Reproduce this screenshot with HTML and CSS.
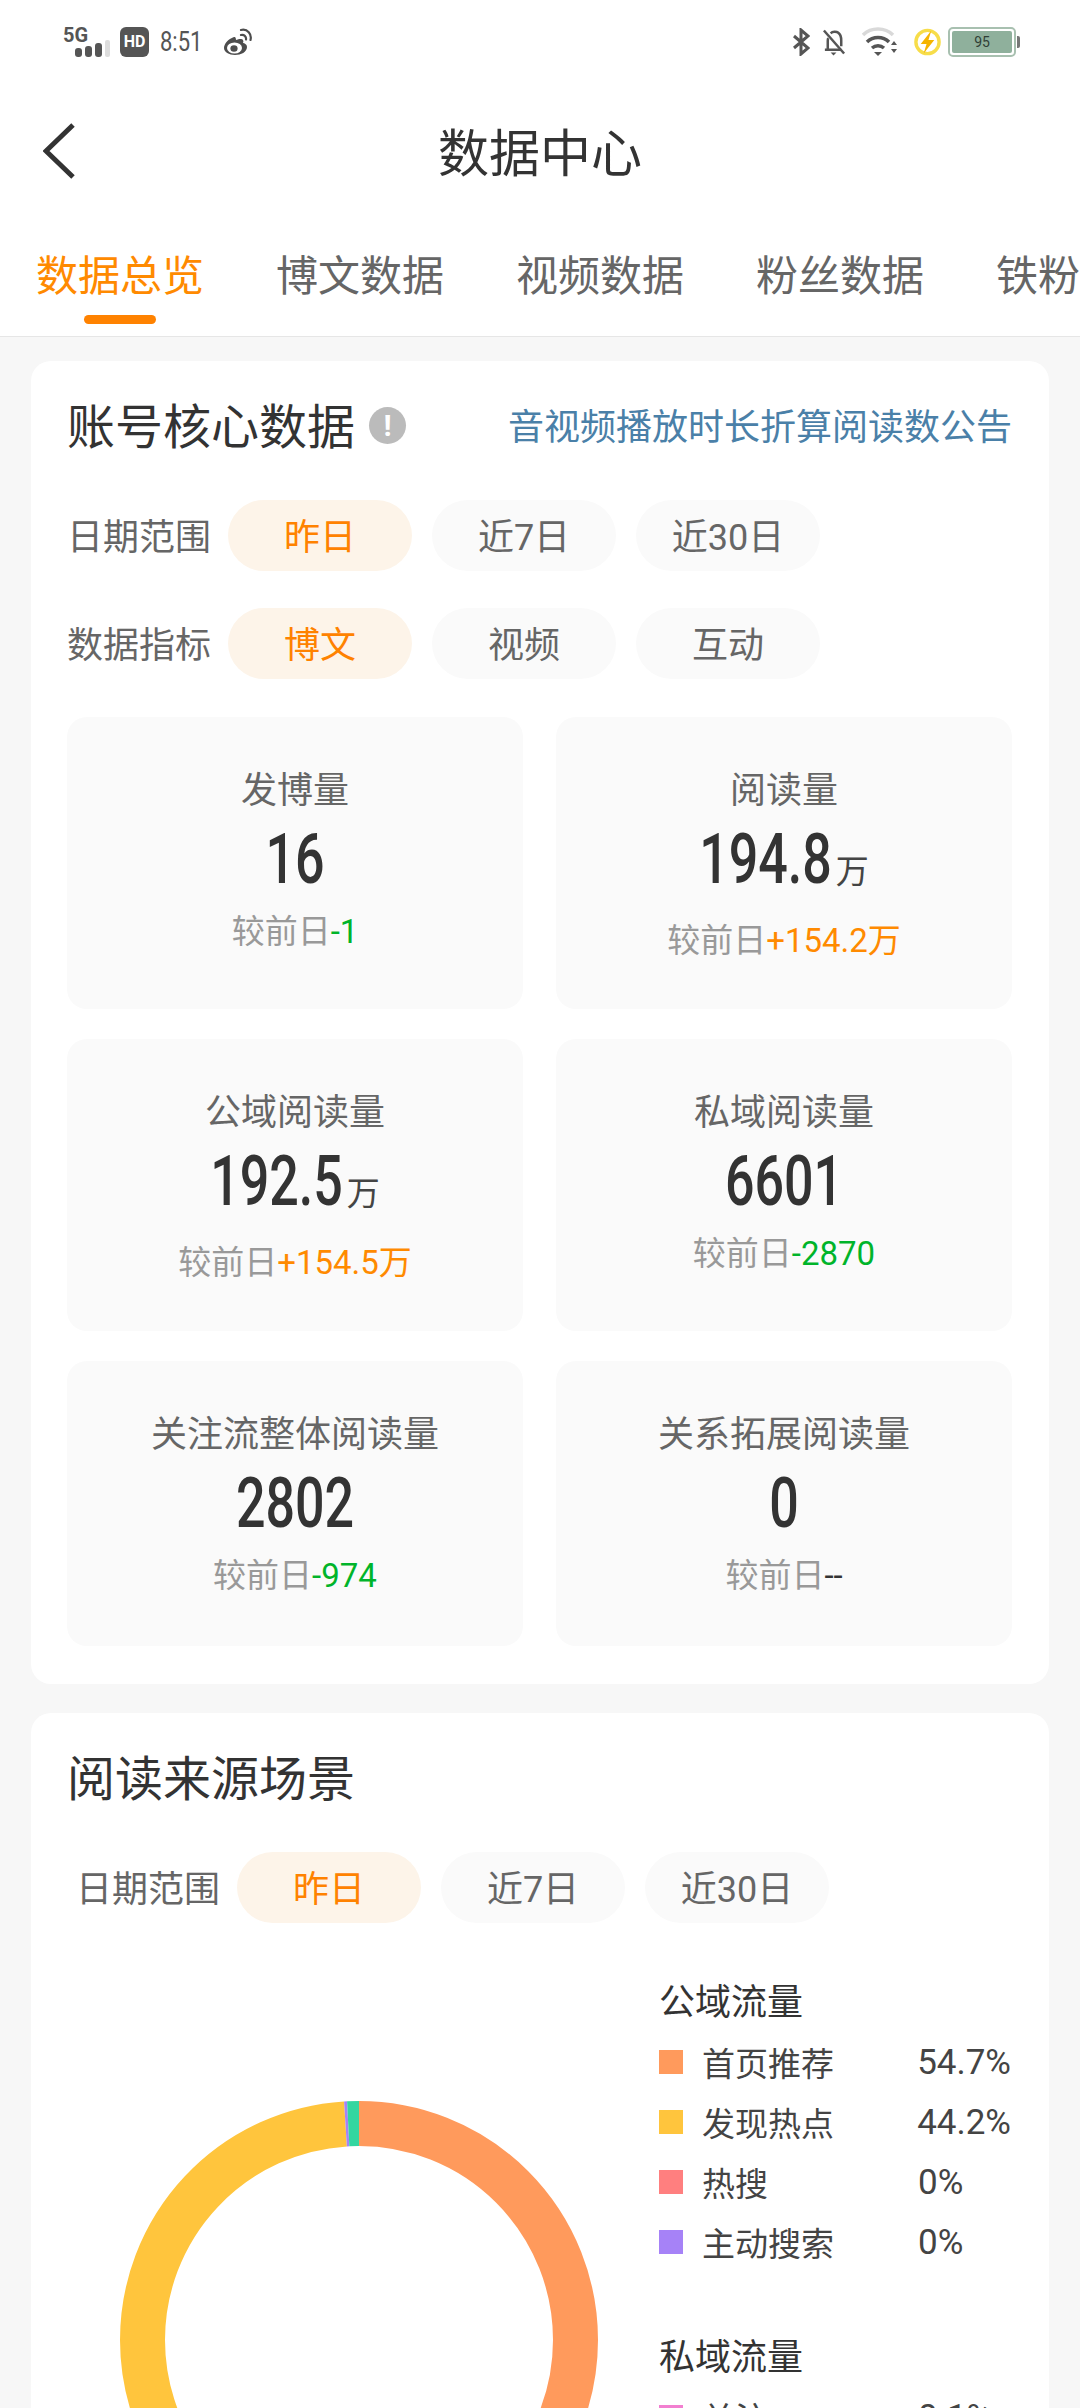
FILE: index.html
```html
<!DOCTYPE html>
<html lang="zh">
<head>
    <meta charset="UTF-8">
    <meta name="viewport" content="width=device-width, initial-scale=1.0">
    <title>数据中心</title>
    <link rel="stylesheet" href="styles.css">
</head>
<body>

    <!-- Barra de estado -->
    <div class="status">
        <div class="status-group">
            <div class="signal">
                <span class="signal-5g">5G</span>
                <svg class="signal-bars" width="35" height="17" viewBox="0 0 35 17">
                    <rect x="0" y="8" width="7" height="9" rx="3" fill="#555"/>
                    <rect x="10" y="6" width="7" height="11" rx="3" fill="#555"/>
                    <rect x="20" y="3" width="7" height="14" rx="3" fill="#555"/>
                    <rect x="30" y="0" width="5" height="17" rx="2" fill="#ddd"/>
                </svg>
            </div>
            <span class="hd">HD</span>
            <span class="clock">8:51</span>
            <svg class="weibo" width="30" height="28" viewBox="0 0 30 28">
                <path d="M11 9C5 11 1 16 1 20c0 4 5 7 11 7s12-3 12-8c0-3-3-4-4-4 1-2 0-4-2-4-2-.2-4 .6-5 1 0-2-.5-3.500-2-3z" fill="#4d4d4d"/>
                <ellipse cx="11.500" cy="20" rx="7.500" ry="5.500" fill="#fff"/>
                <ellipse cx="11" cy="20.500" rx="3.600" ry="3.200" fill="#4d4d4d"/>
                <path d="M18 7c3-.8 5.500 1.500 5 4.500M18 2c6.500-1.500 11 4 9.500 10" fill="none" stroke="#4d4d4d" stroke-width="2.200" stroke-linecap="round"/>
            </svg>
        </div>
        <div class="status-group status-right">
            <svg class="icon-bt" width="18" height="28" viewBox="0 0 18 28">
                <path d="M2 8l14 12-7 6V2l7 6L2 20" fill="none" stroke="#555" stroke-width="3"/>
            </svg>
            <svg class="icon-bell" width="25" height="30" viewBox="0 0 26 30">
                <path d="M3 23h17M6 23v-9c0-1 0-2 .5-3M9 6c2-2 6-2 8-.5 3 2 3 5 3 8v6" fill="none" stroke="#555" stroke-width="2.600"/>
                <path d="M2 3l21 24" stroke="#555" stroke-width="2.600"/>
                <path d="M9 26h6l-3 3z" fill="#555"/>
            </svg>
            <svg class="icon-wifi" width="36" height="30" viewBox="0 0 36 30">
                <path d="M1 8c8-8 22-8 30 0" fill="none" stroke="#d9d9d9" stroke-width="3.500"/>
                <path d="M5 15c6-6 16-6 22 0M10 21c3.500-3 8.500-3 12 0" fill="none" stroke="#555" stroke-width="3.500"/>
                <path d="M12 25h8l-4 4z" fill="#555"/>
                <path d="M29 18l3-4 3 4zM29 22h6l-3 4z" fill="#555"/>
            </svg>
            <svg class="icon-bolt" width="29" height="30" viewBox="0 0 30 30">
                <circle cx="15" cy="15" r="12" fill="#fff" stroke="#f7dd4a" stroke-width="3.500"/>
                <path d="M19 3L8 17h6l-3 10 11-14h-6z" fill="#f5b400"/>
            </svg>
            <div class="battery">
                <div class="battery-body"><span class="battery-fill">95</span></div>
                <span class="battery-nub"></span>
            </div>
        </div>
    </div>

    <!-- Cabecera con título -->
    <div class="nav">
        <svg class="back" width="32" height="56" viewBox="0 0 32 56">
            <path d="M30 2L3 28l27 26" fill="none" stroke="#333" stroke-width="5"/>
        </svg>
        <h1 class="nav-title">数据中心</h1>
    </div>

    <!-- Pestañas -->
    <div class="tabs">
        <span class="tab tab-active">数据总览</span>
        <span class="tab">博文数据</span>
        <span class="tab">视频数据</span>
        <span class="tab">粉丝数据</span>
        <span class="tab">铁粉</span>
    </div>

    <div class="page">

        <!-- Datos principales -->
        <section class="card card-core">
            <div class="card-head">
                <div class="card-title-wrap">
                    <h2 class="card-title">账号核心数据</h2>
                    <span class="info">!</span>
                </div>
                <span class="notice">音视频播放时长折算阅读数公告</span>
            </div>

            <div class="filter">
                <span class="filter-label">日期范围</span>
                <span class="chip chip-active">昨日</span>
                <span class="chip">近7日</span>
                <span class="chip">近30日</span>
            </div>
            <div class="filter filter-second">
                <span class="filter-label">数据指标</span>
                <span class="chip chip-active">博文</span>
                <span class="chip">视频</span>
                <span class="chip">互动</span>
            </div>

            <div class="tiles">
                <div class="tile">
                    <div class="tile-label">发博量</div>
                    <div class="tile-value"><span class="num">16</span></div>
                    <div class="tile-cmp">较前日<span class="down">-1</span></div>
                </div>
                <div class="tile tile-wan">
                    <div class="tile-label">阅读量</div>
                    <div class="tile-value"><span class="num">194.8</span><span class="wan">万</span></div>
                    <div class="tile-cmp">较前日<span class="up">+154.2万</span></div>
                </div>
                <div class="tile tile-wan">
                    <div class="tile-label">公域阅读量</div>
                    <div class="tile-value"><span class="num">192.5</span><span class="wan">万</span></div>
                    <div class="tile-cmp">较前日<span class="up">+154.5万</span></div>
                </div>
                <div class="tile">
                    <div class="tile-label">私域阅读量</div>
                    <div class="tile-value"><span class="num">6601</span></div>
                    <div class="tile-cmp">较前日<span class="down">-2870</span></div>
                </div>
                <div class="tile">
                    <div class="tile-label">关注流整体阅读量</div>
                    <div class="tile-value"><span class="num">2802</span></div>
                    <div class="tile-cmp">较前日<span class="down">-974</span></div>
                </div>
                <div class="tile">
                    <div class="tile-label">关系拓展阅读量</div>
                    <div class="tile-value"><span class="num">0</span></div>
                    <div class="tile-cmp">较前日<span class="none">--</span></div>
                </div>
            </div>
        </section>

        <!-- Fuentes de lectura -->
        <section class="card card-source">
            <div class="card-head">
                <h2 class="card-title">阅读来源场景</h2>
            </div>

            <div class="filter filter-inset">
                <span class="filter-label">日期范围</span>
                <span class="chip chip-active">昨日</span>
                <span class="chip">近7日</span>
                <span class="chip">近30日</span>
            </div>

            <div class="chart">
                <svg class="donut" width="478" height="478" viewBox="0 0 478 478">
                    <g fill="none" stroke-width="45" transform="rotate(-90 239 239)">
                        <circle cx="239" cy="239" r="216.500" pathLength="100" stroke="#ff9a5c" stroke-dasharray="54.700 45.300"/>
                        <circle cx="239" cy="239" r="216.500" pathLength="100" stroke="#ffc53d" stroke-dasharray="44.300 55.700" stroke-dashoffset="-54.700"/>
                        <circle cx="239" cy="239" r="216.500" pathLength="100" stroke="#a682f7" stroke-dasharray="0.200 99.800" stroke-dashoffset="-99"/>
                        <circle cx="239" cy="239" r="216.500" pathLength="100" stroke="#33d6a0" stroke-dasharray="0.800 99.200" stroke-dashoffset="-99.200"/>
                    </g>
                </svg>

                <div class="legend">
                    <div class="legend-title">公域流量</div>
                    <div class="legend-row"><i class="swatch swatch-home"></i><span class="legend-name">首页推荐</span><span class="legend-pct">54.7%</span></div>
                    <div class="legend-row"><i class="swatch swatch-hot"></i><span class="legend-name">发现热点</span><span class="legend-pct">44.2%</span></div>
                    <div class="legend-row"><i class="swatch swatch-search"></i><span class="legend-name">热搜</span><span class="legend-pct">0%</span></div>
                    <div class="legend-row"><i class="swatch swatch-active"></i><span class="legend-name">主动搜索</span><span class="legend-pct">0%</span></div>
                    <div class="legend-title legend-title-second">私域流量</div>
                    <div class="legend-row"><i class="swatch swatch-follow"></i><span class="legend-name">关注</span><span class="legend-pct">0.1%</span></div>
                </div>
            </div>
        </section>

    </div>

</body>
</html>
```

FILE: styles.css
```css
/* Estilos generales */
html, body {
    height: 2408px;
    overflow: hidden;
}
body {
    margin: 0;
    background-color: #fff;
    color: #333;
    font-family: Roboto, "Noto Sans CJK SC", sans-serif;
}
/* Barra de estado */
.status {
    height: 70px;
    display: flex;
    justify-content: space-between;
    align-items: flex-start;
    padding: 27px 60px 0 63px;
    box-sizing: border-box;
}
.status-group {
    display: flex;
    align-items: center;
}
.icon-bt {
    margin-right: 12px;
}
.icon-bell {
    margin-right: 15px;
}
.icon-wifi {
    margin-right: 15px;
}
.icon-bolt {
    margin-right: 6px;
}
.signal {
    width: 47px;
    height: 30px;
    position: relative;
    margin-right: 10px;
}
.signal-5g {
    font-size: 20px;
    line-height: 16px;
    font-weight: 700;
    color: #555;
    display: block;
}
.signal-bars {
    position: absolute;
    left: 12px;
    top: 13px;
}
.hd {
    width: 29px;
    height: 30px;
    border-radius: 6px;
    background-color: #555;
    color: #fff;
    font-size: 16px;
    font-weight: 700;
    line-height: 30px;
    text-align: center;
}
.clock {
    display: inline-block;
    font-size: 22px;
    line-height: 30px;
    color: #555;
    margin: 0 21px 0 11px;
    transform: scaleY(1.25);
}
.battery {
    display: flex;
    align-items: center;
}
.battery-body {
    width: 68px;
    height: 30px;
    border: 2px solid #a8c0b0;
    border-radius: 5px;
    padding: 2px;
    box-sizing: border-box;
}
.battery-fill {
    display: block;
    height: 22px;
    background-color: #8fb09c;
    border-radius: 2px;
    font-size: 14px;
    line-height: 22px;
    text-align: center;
    color: #2f3f36;
}
.battery-nub {
    width: 3px;
    height: 12px;
    background-color: #777;
    border-radius: 0 2px 2px 0;
    margin-left: 1px;
}
/* Cabecera */
.nav {
    height: 164px;
    position: relative;
    display: flex;
    align-items: center;
    justify-content: center;
}
.back {
    position: absolute;
    left: 43px;
    top: 53px;
}
.nav-title {
    margin: 0;
    padding-top: 5px;
    font-size: 51px;
    line-height: 60px;
    font-weight: 400;
    color: #333;
}
/* Pestañas */
.tabs {
    height: 103px;
    display: flex;
    gap: 72px;
    padding-left: 36px;
    border-bottom: 1px solid #e6e6e6;
    overflow: hidden;
    white-space: nowrap;
    box-sizing: border-box;
}
.tab {
    position: relative;
    flex: none;
    height: 86px;
    font-size: 42px;
    line-height: 86px;
    color: #666;
}
.tab-active {
    color: #ff8a00;
}
.tab-active::after {
    content: "";
    position: absolute;
    left: 48px;
    top: 81px;
    width: 72px;
    height: 9px;
    border-radius: 5px;
    background-color: #ff8200;
}
/* Contenido */
.page {
    background-color: #f7f7f7;
    padding: 24px 31px 0;
    height: 2071px;
    box-sizing: border-box;
}
.card {
    background-color: #fff;
    border-radius: 20px;
    padding: 40px 37px 38px 36px;
}
.card-source {
    margin-top: 29px;
}
.card-head {
    height: 54px;
    display: flex;
    justify-content: space-between;
    align-items: center;
    margin-bottom: 45px;
}
.card-title-wrap {
    display: flex;
    align-items: center;
    gap: 14px;
}
.card-title {
    margin: 0;
    font-size: 48px;
    line-height: 54px;
    font-weight: 400;
    color: #333;
}
.info {
    width: 37px;
    height: 37px;
    margin-bottom: 6px;
    border-radius: 50%;
    background-color: #bbb;
    color: #fff;
    font-size: 30px;
    font-weight: 700;
    line-height: 37px;
    text-align: center;
}
.notice {
    font-size: 36px;
    line-height: 54px;
    color: #4a80a8;
}
/* Filtros */
.filter {
    display: flex;
    align-items: center;
    gap: 20px;
    height: 71px;
}
.filter-second {
    margin-top: 37px;
}
.filter-inset {
    padding-left: 9px;
}
.filter-label {
    width: 144px;
    height: 71px;
    margin-right: -3px;
    font-size: 36px;
    line-height: 77px;
    color: #666;
    white-space: nowrap;
}
.chip {
    width: 184px;
    height: 71px;
    border-radius: 36px;
    background-color: #fafafa;
    color: #666;
    font-size: 36px;
    line-height: 77px;
    text-align: center;
}
.chip-active {
    background-color: #fdf4e9;
    color: #ff8200;
}
/* Recuadros de datos */
.tiles {
    display: grid;
    grid-template-columns: 456px 456px;
    gap: 30px 33px;
    margin-top: 38px;
}
.tile {
    min-height: 285px;
    padding: 50px 0 46px;
    box-sizing: border-box;
    background-color: #fafafa;
    border-radius: 20px;
    text-align: center;
}
.tile-label {
    font-size: 36px;
    line-height: 48px;
    color: #666;
}
.tile-value {
    height: 72px;
    margin-top: 15px;
    line-height: 72px;
    color: #333;
}
/* Cifras altas y estrechas */
.num {
    display: inline-block;
    font-size: 52px;
    font-weight: 500;
    transform: scaleY(1.35);
    transform-origin: 50% 54px;
}
.wan {
    font-size: 33px;
    color: #444;
    margin-left: 4px;
}
.tile-cmp {
    margin-top: 8px;
    font-size: 33px;
    line-height: 44px;
    color: #999;
}
.tile-wan .tile-cmp {
    margin-top: 17px;
}
.up {
    color: #ff8a00;
}
.down {
    color: #00b42a;
}
.none {
    color: #333;
}
/* Gráfico y leyenda */
.chart {
    display: flex;
    align-items: flex-start;
    margin-top: 56px;
}
.donut {
    flex: none;
    margin: 122px 0 0 53px;
}
.legend {
    width: 352px;
    margin-left: 61px;
    font-size: 33px;
    color: #444;
}
.legend-title {
    font-size: 36px;
    line-height: 48px;
    margin-bottom: 5px;
    color: #333;
}
.legend-title-second {
    margin-top: 62px;
}
.legend-row {
    display: flex;
    align-items: center;
    height: 60px;
}
.legend-name {
    width: 216px;
}
.legend-pct {
    font-size: 35px;
}
.swatch {
    flex: none;
    width: 24px;
    height: 24px;
    margin-right: 19px;
}
.swatch-home {
    background-color: #ff9a5c;
}
.swatch-hot {
    background-color: #ffc53d;
}
.swatch-search {
    background-color: #ff7f7f;
}
.swatch-active {
    background-color: #a682f7;
}
.swatch-follow {
    background-color: #f27fd0;
}
```
